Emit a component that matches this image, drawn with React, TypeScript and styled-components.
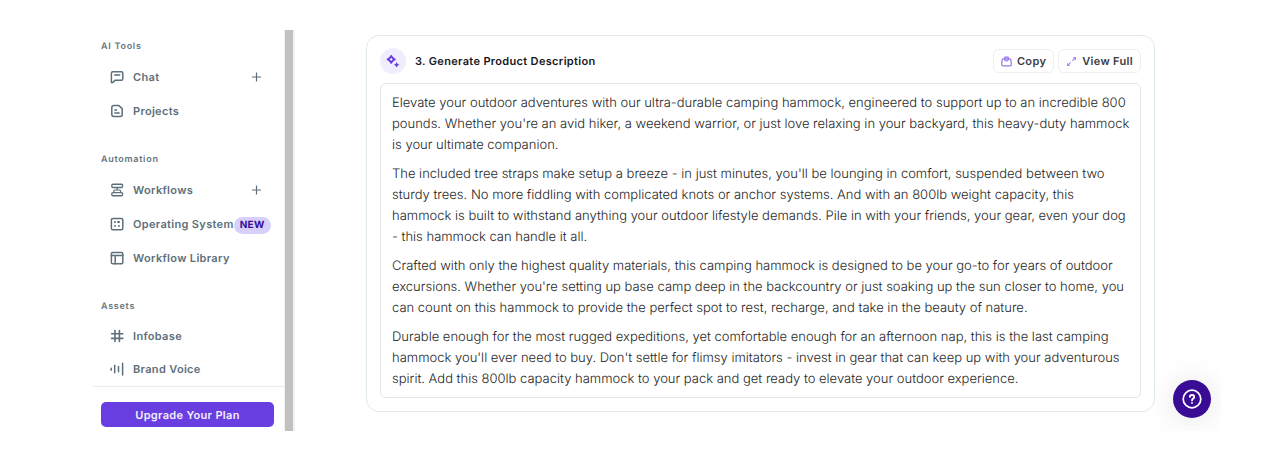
import React from "react";
import styled, { createGlobalStyle } from "styled-components";

const GlobalStyle = createGlobalStyle`
  *, *::before, *::after { box-sizing: border-box; }
  body {
    margin: 0;
    background: #ffffff;
    font-family: Inter, "Liberation Sans", sans-serif;
    text-rendering: geometricPrecision;
    color: #1f1f27;
  }
  button { font-family: inherit; text-rendering: inherit; cursor: pointer; }
  h2, p, ul { margin: 0; padding: 0; }
`;

const Shell = styled.div`
  display: flex;
  margin: 30px 49px 41px 93px;
  position: relative;
  overflow: hidden;
`;

const Sidebar = styled.aside`
  flex: none;
  width: 191px;
  display: flex;
  flex-direction: column;
`;

const ScrollTrack = styled.div`
  flex: none;
  width: 11px;
  background: #c1c1c1;
  border: solid #f1f1f1;
  border-width: 0 2px 0 1px;
`;

const Nav = styled.nav`
  flex: 1;
  padding: 9px 10px 0 8px;
`;

const NavItem = styled.li`
  display: flex;
  align-items: center;
  height: 34px;
  padding: 0 13px 0 9px;
`;

const GroupTitle = styled.h2`
  font-size: 9px;
  line-height: 16px;
  font-weight: 600;
  letter-spacing: 0.08em;
  color: #64757f;
`;

const NavGroup = styled.section<{ $compact?: boolean }>`
  & + & { margin-top: ${(p) => (p.$compact ? 24 : 25)}px; }
  ${NavItem} { height: ${(p) => (p.$compact ? 33 : 34)}px; }
  ${GroupTitle} { margin-bottom: ${(p) => (p.$compact ? 4 : 5)}px; }
`;

const NavList = styled.ul`
  list-style: none;
`;

const NavLink = styled.a`
  display: flex;
  align-items: center;
  gap: 9px;
  font-size: 11px;
  line-height: 16px;
  font-weight: 600;
  letter-spacing: 0.03em;
  white-space: nowrap;
  text-decoration: none;
  color: #5d6f7a;
  svg { flex: none; }
`;

const AddButton = styled.button`
  display: flex;
  margin-left: auto;
  padding: 0;
  border: 0;
  background: none;
  color: #5d6f7a;
`;

const NewBadge = styled.span`
  flex: none;
  margin-top: 2px;
  padding: 0 6px;
  border-radius: 9px;
  background: #d6d0fb;
  color: #3a0f96;
  font-size: 10px;
  line-height: 17px;
  font-weight: 700;
  letter-spacing: 0.03em;
`;

const SidebarFooter = styled.div`
  border-top: 1px solid #e8ecef;
  padding: 15px 10px 4px 8px;
`;

const UpgradeButton = styled.button`
  display: block;
  width: 100%;
  height: 25px;
  padding: 0;
  border: 0;
  border-radius: 5px;
  background: #693ee0;
  color: #f3effd;
  font-size: 11px;
  font-weight: 600;
  letter-spacing: 0.03em;
`;

const Main = styled.main`
  flex: 1;
  min-width: 0;
  padding: 5px 66px 19px 71px;
`;

const Card = styled.article`
  border: 1px solid #e0e9ee;
  border-radius: 13px;
  padding: 12px 13px 13px;
`;

const CardHeader = styled.header`
  display: flex;
  align-items: center;
  margin-bottom: 9px;
`;

const StepIcon = styled.span`
  display: grid;
  place-items: center;
  width: 26px;
  height: 26px;
  border-radius: 50%;
  background: #f0eefd;
  margin-right: 9px;
`;

const CardTitle = styled.h2`
  flex: 1;
  font-size: 11px;
  line-height: 18px;
  font-weight: 600;
  letter-spacing: 0.03em;
  color: #17171c;
`;

const Actions = styled.div`
  display: flex;
  gap: 4px;
`;

const ActionButton = styled.button`
  display: flex;
  align-items: center;
  gap: 5px;
  height: 24px;
  padding: 0 7px;
  border: 1px solid #e9eff3;
  border-radius: 6px;
  background: #ffffff;
  color: #3c3c43;
  font-size: 11px;
  font-weight: 600;
  letter-spacing: 0.03em;
`;

const Output = styled.div`
  display: flex;
  flex-direction: column;
  gap: 8px;
  border: 1px solid #dfe7ec;
  border-radius: 6px;
  padding: 9px 8px 7px 11px;
  font-size: 13px;
  font-weight: 300;
  line-height: 21px;
`;

const HelpButton = styled.button`
  position: absolute;
  right: 10px;
  bottom: 13px;
  display: grid;
  place-items: center;
  width: 38px;
  height: 38px;
  padding: 0;
  border: 0;
  border-radius: 50%;
  background: #3a0b95;
  color: #ffffff;
  box-shadow: 0 2px 30px rgba(0, 0, 0, 0.12);
`;

const LineIcon = ({ children }: { children: React.ReactNode }) => (
  <svg width="14" height="14" viewBox="0 0 14 14" fill="none" stroke="currentColor" strokeWidth="1.5" strokeLinejoin="round" strokeLinecap="round" aria-hidden="true">
    {children}
  </svg>
);

const ChatIcon = () => (
  <LineIcon>
    <path d="M1.4 12.4V3.2Q1.4 1.7 2.8 1.7H11.4Q12.8 1.7 12.8 3.2V8.8Q12.8 10.3 11.4 10.3H5L3.2 12.1Q1.8 13.2 1.4 12.4Z" />
    <path d="M4.6 5H9.8" strokeWidth="1.3" />
  </LineIcon>
);
const ProjectsIcon = () => (
  <LineIcon>
    <path d="M3.8 1.4H8.6L12.2 4.6V10.6Q12.2 12.6 10.2 12.6H3.8Q1.8 12.6 1.8 10.6V3.4Q1.8 1.4 3.8 1.4Z" />
    <path d="M4.8 6H6.6M4.8 9H9.2" strokeWidth="1.3" />
  </LineIcon>
);
const WorkflowsIcon = () => (
  <LineIcon>
    <rect x="1.8" y="1.3" width="10.8" height="3.2" rx="1.2" strokeWidth="1.4" />
    <rect x="1.8" y="9.6" width="10.8" height="3.2" rx="1.2" strokeWidth="1.4" />
    <path d="M7.2 4.8V7M3.8 9.2V8.2Q3.8 7 5 7H9.4Q10.6 7 10.6 8.2V9.2" strokeWidth="1.2" />
  </LineIcon>
);
const SystemIcon = () => (
  <LineIcon>
    <rect x="1.4" y="1.4" width="11.4" height="11.4" rx="1.6" />
    <path d="M4.9 5H5M8 5H9.1M4.9 8.9H5M8.9 8.9H9" strokeWidth="1.8" />
  </LineIcon>
);
const LibraryIcon = () => (
  <LineIcon>
    <rect x="1.4" y="1.4" width="11.4" height="11.4" rx="1.4" />
    <path d="M1.4 4.6H12.8M5.2 4.6V12.8" />
  </LineIcon>
);
const HashIcon = () => (
  <LineIcon>
    <path d="M5 1.6V12.4M9.4 1.6V12.4M1.6 4.8H12.8M1.6 9.4H12.8" strokeWidth="1.6" />
  </LineIcon>
);
const VoiceIcon = () => (
  <LineIcon>
    <path d="M1.2 6.2V8.2M4.7 3.2V10.8M8.5 4.6V9.8M12.6 1.2V13" strokeWidth="1.5" />
  </LineIcon>
);
const PlusIcon = () => (
  <svg width="9" height="10" viewBox="0 0 9 10" stroke="currentColor" strokeWidth="1.2" aria-hidden="true">
    <path d="M4.5 0.5V9.5M0 5H9" />
  </svg>
);
const SparkleIcon = () => (
  <svg width="14" height="14" viewBox="0 0 14 14" aria-hidden="true">
    <path d="M5.2 1.9Q6.2 4.4 8.8 5.4Q6.2 6.4 5.2 8.9Q4.2 6.4 1.6 5.4Q4.2 4.4 5.2 1.9Z" fill="none" stroke="#693ee0" strokeWidth="1.8" strokeLinejoin="round" />
    <path d="M10.6 7.9L11.6 9.9L13.4 10.8L11.6 11.7L10.6 13.6L9.6 11.7L7.8 10.8L9.6 9.9Z" fill="#693ee0" />
  </svg>
);
const CopyIcon = () => (
  <svg width="11" height="11" viewBox="0 0 11 11" fill="none" stroke="#9676ea" strokeWidth="1.2" strokeLinejoin="round" aria-hidden="true">
    <path d="M2.2 2.9H8.8Q9.8 2.9 9.9 3.9L10.3 8.6Q10.3 9.9 9 9.9H2Q0.7 9.9 0.7 8.6L1.1 3.9Q1.2 2.9 2.2 2.9Z" />
    <path d="M3.8 2.9V1.1H7.2V2.9M3.8 2.9V4.2L5.5 5L7.2 4.2V2.9" />
  </svg>
);
const ExpandIcon = () => (
  <svg width="11" height="11" viewBox="0 0 11 11" fill="none" stroke="#a78bf0" strokeWidth="1.1" aria-hidden="true">
    <path d="M7.2 1.6H9.5V3.9M9.3 1.8L6.3 4.8M3.8 9.5H1.5V7.2M1.7 9.3L4.7 6.3" />
  </svg>
);
const HelpIcon = () => (
  <svg width="20" height="20" viewBox="0 0 20 20" fill="none" stroke="currentColor" strokeLinecap="round" aria-hidden="true">
    <circle cx="10" cy="10" r="8.8" strokeWidth="1.7" />
    <path d="M7.8 7.9Q7.9 6 10 6Q12.2 6 12.2 7.9Q12.2 9 11.1 9.6Q10 10.2 10 11.4" strokeWidth="1.8" />
    <path d="M10 13.9H10.01" strokeWidth="1.9" />
  </svg>
);

type Item = { label: string; icon: React.ReactNode; add?: boolean; isNew?: boolean };

const groups: { title: string; compact?: boolean; items: Item[] }[] = [
  {
    title: "AI Tools",
    items: [
      { label: "Chat", icon: <ChatIcon />, add: true },
      { label: "Projects", icon: <ProjectsIcon /> },
    ],
  },
  {
    title: "Automation",
    items: [
      { label: "Workflows", icon: <WorkflowsIcon />, add: true },
      { label: "Operating System", icon: <SystemIcon />, isNew: true },
      { label: "Workflow Library", icon: <LibraryIcon /> },
    ],
  },
  {
    title: "Assets",
    compact: true,
    items: [
      { label: "Infobase", icon: <HashIcon /> },
      { label: "Brand Voice", icon: <VoiceIcon /> },
    ],
  },
];

const paragraphs = [
  "Elevate your outdoor adventures with our ultra-durable camping hammock, engineered to support up to an incredible 800 pounds. Whether you're an avid hiker, a weekend warrior, or just love relaxing in your backyard, this heavy-duty hammock is your ultimate companion.",
  "The included tree straps make setup a breeze - in just minutes, you'll be lounging in comfort, suspended between two sturdy trees. No more fiddling with complicated knots or anchor systems. And with an 800lb weight capacity, this hammock is built to withstand anything your outdoor lifestyle demands. Pile in with your friends, your gear, even your dog - this hammock can handle it all.",
  "Crafted with only the highest quality materials, this camping hammock is designed to be your go-to for years of outdoor excursions. Whether you're setting up base camp deep in the backcountry or just soaking up the sun closer to home, you can count on this hammock to provide the perfect spot to rest, recharge, and take in the beauty of nature.",
  "Durable enough for the most rugged expeditions, yet comfortable enough for an afternoon nap, this is the last camping hammock you'll ever need to buy. Don't settle for flimsy imitators - invest in gear that can keep up with your adventurous spirit. Add this 800lb capacity hammock to your pack and get ready to elevate your outdoor experience.",
];

export default function App() {
  return (
    <>
      <GlobalStyle />
      <Shell>
        <Sidebar>
          <Nav>
            {groups.map((group) => (
              <NavGroup key={group.title} $compact={group.compact}>
                <GroupTitle>{group.title}</GroupTitle>
                <NavList>
                  {group.items.map((item) => (
                    <NavItem key={item.label}>
                      <NavLink href="#">
                        {item.icon}
                        {item.label}
                      </NavLink>
                      {item.isNew && <NewBadge>NEW</NewBadge>}
                      {item.add && (
                        <AddButton type="button" aria-label={`Add to ${item.label}`}>
                          <PlusIcon />
                        </AddButton>
                      )}
                    </NavItem>
                  ))}
                </NavList>
              </NavGroup>
            ))}
          </Nav>
          <SidebarFooter>
            <UpgradeButton type="button">Upgrade Your Plan</UpgradeButton>
          </SidebarFooter>
        </Sidebar>
        <ScrollTrack />
        <Main>
          <Card>
            <CardHeader>
              <StepIcon>
                <SparkleIcon />
              </StepIcon>
              <CardTitle>3. Generate Product Description</CardTitle>
              <Actions>
                <ActionButton type="button">
                  <CopyIcon />
                  Copy
                </ActionButton>
                <ActionButton type="button">
                  <ExpandIcon />
                  View Full
                </ActionButton>
              </Actions>
            </CardHeader>
            <Output>
              {paragraphs.map((text) => (
                <p key={text}>{text}</p>
              ))}
            </Output>
          </Card>
        </Main>
        <HelpButton type="button" aria-label="Help">
          <HelpIcon />
        </HelpButton>
      </Shell>
    </>
  );
}
